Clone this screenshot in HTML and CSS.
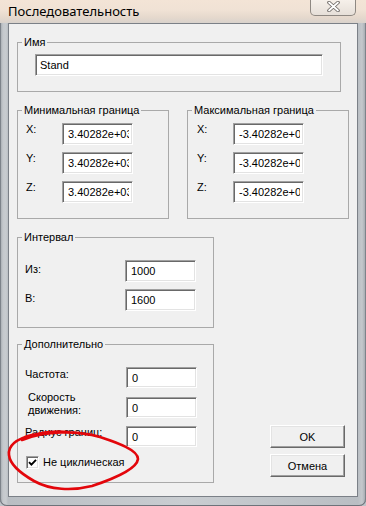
FILE: index.html
```html
<!DOCTYPE html>
<html lang="ru">
<head>
<meta charset="utf-8">
<title>Последовательность</title>
<link rel="stylesheet" href="styles.css">
</head>
<body>
<div class="window">
  <div class="titlebar">
    <span class="title">Последовательность</span>
    <span class="close">
      <svg width="13" height="11" viewBox="0 0 13 11">
        <path d="M2 1.5 L11 9.5 M11 1.5 L2 9.5" stroke="#6f6a66" stroke-width="3.6" stroke-linecap="round"/>
        <path d="M2 1.5 L11 9.5 M11 1.5 L2 9.5" stroke="#ffffff" stroke-width="1.7" stroke-linecap="round"/>
      </svg>
    </span>
  </div>
  <div class="client">
    <fieldset class="group g-name">
      <legend>Имя</legend>
      <div class="name-body">
        <input class="field field-name" value="Stand">
      </div>
    </fieldset>

    <div class="bounds">
      <fieldset class="group g-min">
        <legend>Минимальная граница</legend>
        <div class="coord-body">
          <label>X:</label><input class="field" value="3.40282e+038">
          <label>Y:</label><input class="field" value="3.40282e+038">
          <label>Z:</label><input class="field" value="3.40282e+038">
        </div>
      </fieldset>
      <fieldset class="group g-max">
        <legend>Максимальная граница</legend>
        <div class="coord-body">
          <label>X:</label><input class="field" value="-3.40282e+038">
          <label>Y:</label><input class="field" value="-3.40282e+038">
          <label>Z:</label><input class="field" value="-3.40282e+038">
        </div>
      </fieldset>
    </div>

    <div class="lower">
      <div class="left-col">
        <fieldset class="group g-interval">
          <legend>Интервал</legend>
          <div class="interval-body">
            <label>Из:</label><input class="field" value="1000">
            <label>В:</label><input class="field" value="1600">
          </div>
        </fieldset>
        <fieldset class="group g-extra">
          <legend>Дополнительно</legend>
          <div class="extra-body">
            <div class="row row-rate"><label>Частота:</label><input class="field" value="0"></div>
            <div class="row row-speed"><label>Скорость<br>движения:</label><input class="field" value="0"></div>
            <div class="row row-radius"><label>Радиус границ:</label><input class="field" value="0"></div>
            <div class="row row-check">
              <span class="check">
                <svg width="9" height="9" viewBox="0 0 9 9"><path d="M1 4.2 L3.4 6.6 L8 1.8" fill="none" stroke="#000" stroke-width="1.9"/></svg>
              </span>
              <span class="check-text">Не циклическая</span>
            </div>
          </div>
        </fieldset>
      </div>
      <div class="buttons">
        <button class="btn">OK</button>
        <button class="btn">Отмена</button>
      </div>
    </div>
  </div>
  <svg class="annotation" width="366" height="506" viewBox="0 0 366 506">
    <path d="M22 440 C 45 431, 75 430, 100 437 C 118 443, 138 450, 138 459 C 137 468, 116 478, 92 486 C 72 491, 50 490, 34 481 C 20 473, 10 465, 9 455 C 8 446, 16 439, 32 435 C 45 432, 58 431, 68 432" fill="none" stroke="#e3060b" stroke-width="2.6" stroke-linecap="round" stroke-linejoin="round"/>
  </svg>
</div>
</body>
</html>
```
FILE: styles.css
```css
* {
  box-sizing: border-box;
}

html,
body {
  margin: 0;
  padding: 0;
}

body {
  width: 366px;
  height: 506px;
  overflow: hidden;
  font-family: "Liberation Sans", Arial, sans-serif;
  font-size: 11px;
  color: #000;
  background: #bfc4c9;
}

.window {
  position: relative;
  width: 366px;
  height: 506px;
  display: flex;
  flex-direction: column;
  padding: 0 8px 9px;
  background: linear-gradient(90deg, #9fa5ab 0, #c4c8cc 3px, #c8ccd0 6px, #b9bec3 8px, #c9cdd1 50%, #b9bec3 358px, #c4c8cc 362px, #9fa5ab 366px);
  border-radius: 0 0 7px 7px;
  box-shadow: inset 0 -1px 0 #6d737a, inset 1px 0 0 #7d838a, inset -1px 0 0 #7d838a;
}

.titlebar {
  height: 23px;
  margin: 0 -8px;
  padding-left: 8px;
  display: flex;
  align-items: flex-start;
  background: linear-gradient(180deg, #f3e4d6 0, #f0e2d5 10px, #e6d9cd 17px, #d9d2cc 23px);
}

.title {
  font-family: "Noto Sans", "Open Sans", sans-serif;
  font-size: 13px;
  line-height: 16px;
  padding-top: 3px;
  color: #000;
}

.close {
  margin-left: auto;
  margin-right: 10px;
  width: 46px;
  height: 16px;
  border: 1px solid #8e8882;
  border-top: none;
  border-radius: 0 0 5px 5px;
  background: linear-gradient(180deg, #f6f0ea, #e6dfd8);
  display: flex;
  align-items: flex-start;
  justify-content: center;
  padding-top: 1px;
}

.client {
  flex: 1;
  display: flex;
  flex-direction: column;
  background: #f0f0f0;
  border: 1px solid #7b8087;
  padding: 12px 0 0 8px;
}

.group {
  margin: 0;
  padding: 0;
  border: 1px solid #a9a9a9;
  min-width: 0;
}

.group legend {
  margin-left: 4px;
  padding: 0 2px;
  font-size: 11px;
  line-height: 13px;
}

label {
  line-height: 13px;
}

.field {
  display: block;
  margin: 0;
  width: 71px;
  height: 22px;
  padding: 0 3px 0 5px;
  font-family: "Liberation Sans", Arial, sans-serif;
  font-size: 11px;
  color: #000;
  background: #fff;
  border: 1px solid;
  border-color: #a0a0a0 #ffffff #ffffff #a0a0a0;
  box-shadow: inset 1px 1px 0 #696969, inset -1px -1px 0 #e3e3e3;
  outline: none;
}

.g-name {
  width: 324px;
}

.name-body {
  padding: 5px 0 15px 17px;
}

.field-name {
  width: 288px;
  padding-left: 4px;
}

.bounds {
  display: flex;
  gap: 18px;
  margin-top: 12px;
}

.g-min {
  width: 152px;
}

.g-max {
  width: 162px;
}

.coord-body {
  display: grid;
  grid-template-columns: 36px 71px;
  row-gap: 7px;
  align-items: start;
  padding: 6px 0 15px 8px;
}

.g-max .coord-body {
  padding-left: 9px;
}

.lower {
  display: flex;
  align-items: flex-end;
  margin-top: 12px;
}

.left-col {
  width: 197px;
  display: flex;
  flex-direction: column;
  gap: 10px;
}

.interval-body {
  display: grid;
  grid-template-columns: 100px 71px;
  row-gap: 7px;
  align-items: start;
  padding: 16px 0 16px 7px;
}

.interval-body label {
  margin-top: 3px;
}

.extra-body {
  padding: 16px 0 13px 7px;
}

.row {
  display: flex;
  align-items: flex-start;
}

.row label {
  width: 101px;
}

.row .field {
  height: 21px;
}

.row-rate label {
  margin-top: 1px;
}

.row-speed {
  margin-top: 3px;
}

.row-speed label {
  padding-left: 3px;
}

.row-speed .field {
  margin-top: 6px;
}

.row-radius {
  margin-top: 8px;
}

.row-check {
  margin-top: 9px;
  align-items: center;
  height: 13px;
}

.check {
  width: 13px;
  height: 13px;
  margin-left: 1px;
  display: flex;
  align-items: center;
  justify-content: center;
  background: #fff;
  border: 1px solid;
  border-color: #a0a0a0 #ffffff #ffffff #a0a0a0;
  box-shadow: inset 1px 1px 0 #696969, inset -1px -1px 0 #e3e3e3;
}

.check svg {
  display: block;
}

.check-text {
  margin-left: 4px;
  line-height: 13px;
}

.buttons {
  margin-left: auto;
  margin-right: 12px;
  margin-bottom: 6px;
  display: flex;
  flex-direction: column;
  gap: 6px;
}

.btn {
  width: 75px;
  height: 23px;
  margin: 0;
  padding: 0;
  font-family: "Liberation Sans", Arial, sans-serif;
  font-size: 11px;
  color: #000;
  background: #f0f0f0;
  border: 1px solid;
  border-color: #ffffff #696969 #696969 #ffffff;
  box-shadow: inset -1px -1px 0 #a0a0a0, inset 1px 1px 0 #e3e3e3;
}

.annotation {
  position: absolute;
  left: 0;
  top: 0;
  pointer-events: none;
}
```
